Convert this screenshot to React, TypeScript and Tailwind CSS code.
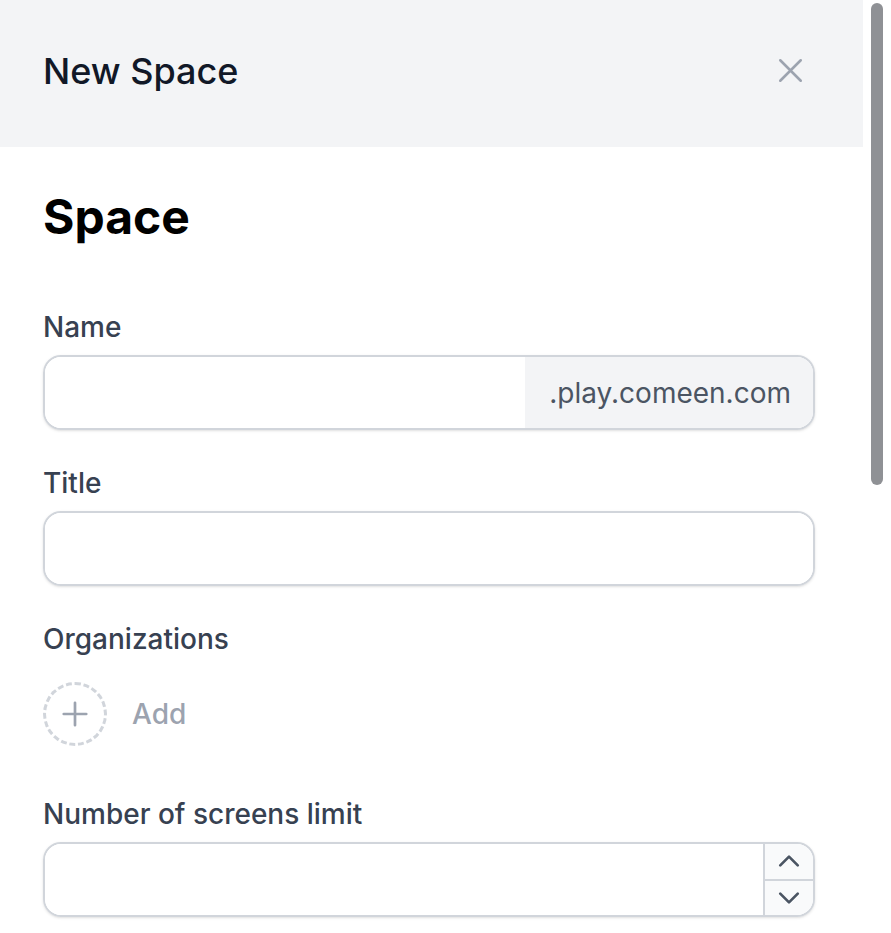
import React from "react";

const font = { fontFamily: "Inter, 'Noto Sans', sans-serif" };

function Label({ children }: { children: React.ReactNode }) {
  return (
    <label className="block text-[28px] leading-[40px] font-medium text-[#374151]">
      {children}
    </label>
  );
}

export default function App() {
  return (
    <div className="w-[891px] h-[933px] flex overflow-hidden bg-white" style={font}>
      {/* ── PANEL ── */}
      <div className="w-[863px] flex flex-col">
        <div className="h-[147px] bg-[#f3f4f6] flex items-center justify-between pl-[43px] pr-[52px] pb-[6px]">
          <h2 className="text-[36px] leading-[56px] font-medium text-[#111827]">New Space</h2>
          <button className="text-[#9ca3af]" aria-label="Close">
            <svg width="41" height="41" viewBox="0 0 24 24" fill="none" stroke="currentColor" strokeWidth="1.5">
              <path strokeLinecap="round" strokeLinejoin="round" d="M6 18 18 6M6 6l12 12" />
            </svg>
          </button>
        </div>

        <div className="pl-[43px] pr-[48px] pt-[38px] flex flex-col">
          <h1 className="text-[48px] leading-[64px] font-bold text-black">Space</h1>

          {/* Name */}
          <div className="mt-[58px]">
            <Label>Name</Label>
            <div className="mt-[8px] h-[75px] flex rounded-[18px] border-2 border-[#d1d5db] overflow-hidden shadow-sm">
              <input className="flex-1 min-w-0 px-[24px] text-[28px] outline-none bg-white" />
              <span className="flex items-center bg-[#f3f4f6] pl-[24px] pr-[22px] text-[28px] text-[#4b5563]">
                .play.comeen.com
              </span>
            </div>
          </div>

          {/* Title */}
          <div className="mt-[33px]">
            <Label>Title</Label>
            <div className="mt-[8px] h-[75px] flex rounded-[18px] border-2 border-[#d1d5db] overflow-hidden shadow-sm">
              <input className="flex-1 min-w-0 px-[24px] text-[28px] outline-none bg-white" />
            </div>
          </div>

          {/* Organizations */}
          <div className="mt-[33px]">
            <Label>Organizations</Label>
            <div className="mt-[23px] flex items-center gap-[25px]">
              <div className="w-[64px] h-[64px] rounded-full border-[3px] border-dashed border-[#d1d5db] flex items-center justify-center text-[#9ca3af]">
                <svg width="36" height="36" viewBox="0 0 24 24" fill="none" stroke="currentColor" strokeWidth="1.8">
                  <path strokeLinecap="round" strokeLinejoin="round" d="M12 4.5v15m7.5-7.5h-15" />
                </svg>
              </div>
              <span className="text-[28px] leading-[40px] font-medium text-[#9ca3af]">Add</span>
            </div>
          </div>

          {/* Number of screens limit */}
          <div className="mt-[48px]">
            <Label>Number of screens limit</Label>
            <div className="mt-[8px] h-[75px] flex rounded-[18px] border-2 border-[#d1d5db] overflow-hidden shadow-sm">
              <input className="flex-1 min-w-0 px-[24px] text-[28px] outline-none bg-white" />
              <div className="w-[50px] flex flex-col border-l-2 border-[#d1d5db] bg-[#f9fafb] text-[#4b5563]">
                <div className="flex-1 flex items-center justify-center border-b-2 border-[#d1d5db]">
                  <svg width="28" height="28" viewBox="0 0 24 24" fill="none" stroke="currentColor" strokeWidth="2.3">
                    <path strokeLinecap="round" strokeLinejoin="round" d="m4.5 15.75 7.5-7.5 7.5 7.5" />
                  </svg>
                </div>
                <div className="flex-1 flex items-center justify-center">
                  <svg width="28" height="28" viewBox="0 0 24 24" fill="none" stroke="currentColor" strokeWidth="2.3">
                    <path strokeLinecap="round" strokeLinejoin="round" d="m19.5 8.25-7.5 7.5-7.5-7.5" />
                  </svg>
                </div>
              </div>
            </div>
          </div>
        </div>
      </div>

      {/* ── SCROLLBAR ── */}
      <div className="flex-1 pl-[8px] pt-[3px]">
        <div className="w-[12px] h-[482px] rounded-full bg-[#8f9195]" />
      </div>
    </div>
  );
}
